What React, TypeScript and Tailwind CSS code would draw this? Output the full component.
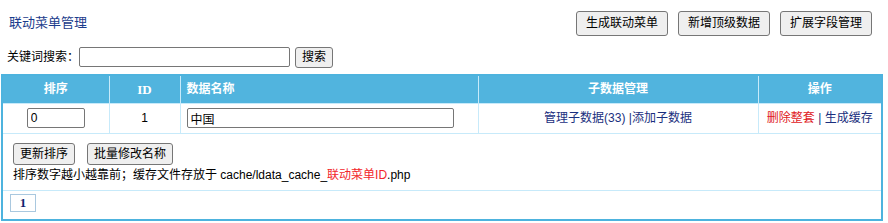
import React from "react";

const btn =
  "h-[25px] px-[9px] bg-[#efefef] border border-[#767676] rounded-[3px] text-[12px] text-black leading-none";

export default function App() {
  const font = { fontFamily: '"Liberation Sans", "Noto Sans CJK SC", sans-serif' };
  return (
    <div className="w-[888px] h-[223px] bg-white text-[12px] text-black" style={font}>
      {/* Top bar */}
      <div className="flex items-center justify-between h-[45px] pl-[9px] pr-[16px] pt-[1px]">
        <h1 className="text-[13px] text-[#1b3c8c] font-normal">联动菜单管理</h1>
        <div className="flex gap-[10px]">
          <button className={btn}>生成联动菜单</button>
          <button className={btn}>新增顶级数据</button>
          <button className={btn}>扩展字段管理</button>
        </div>
      </div>

      {/* Search */}
      <div className="flex items-center h-[29px] pl-[7px] pb-[5px]">
        <span>关键词搜索：</span>
        <input className="w-[211px] h-[20px] border border-[#767676] rounded-[2px] outline-none" />
        <button className="ml-[5px] h-[21px] px-[6px] bg-[#efefef] border border-[#767676] rounded-[3px] leading-none">
          搜索
        </button>
      </div>

      {/* Table box */}
      <div className="ml-[1px] w-[882px] border-2 border-[#4db3de]">
        <table className="w-full table-fixed border-collapse">
          <colgroup>
            <col className="w-[106px]" />
            <col className="w-[71px]" />
            <col className="w-[298px]" />
            <col className="w-[280px]" />
            <col />
          </colgroup>
          <thead>
            <tr className="h-[27px] bg-[#51b4de] text-white font-bold text-[12px]">
              <th className="border-r border-b border-[#c7eafa]">排序</th>
              <th className="border-r border-b border-[#c7eafa]" style={{ fontFamily: '"Liberation Serif", serif', fontSize: 13 }}>ID</th>
              <th className="border-r border-b border-[#c7eafa] text-left pl-[6px]">数据名称</th>
              <th className="border-r border-b border-[#c7eafa]">子数据管理</th>
              <th className="border-b border-[#c7eafa]">操作</th>
            </tr>
          </thead>
          <tbody>
            <tr className="h-[30px]">
              <td className="border-r border-b border-[#c7eafa] text-center">
                <input
                  defaultValue="0"
                  className="w-[58px] h-[20px] px-[3px] border border-[#767676] rounded-[2px] outline-none align-middle"
                />
              </td>
              <td className="border-r border-b border-[#c7eafa] text-center">1</td>
              <td className="border-r border-b border-[#c7eafa] pl-[6px]">
                <input
                  defaultValue="中国"
                  className="w-[267px] h-[20px] px-[3px] border border-[#767676] rounded-[2px] outline-none align-middle"
                />
              </td>
              <td className="border-r border-b border-[#c7eafa] text-center text-[#1a2f7e]">
                管理子数据(33) |添加子数据
              </td>
              <td className="border-b border-[#c7eafa] text-center">
                <span className="text-[#e0201c]">删除整套</span>
                <span className="text-[#1a2f7e]"> | 生成缓存</span>
              </td>
            </tr>
          </tbody>
        </table>

        <div className="pl-[10px] pt-[9px] pb-[6px] border-b border-[#c7eafa]">
          <div className="flex gap-[12px]">
            <button className="h-[22px] px-[6px] bg-[#efefef] border border-[#767676] rounded-[3px] leading-none">
              更新排序
            </button>
            <button className="h-[22px] px-[6px] bg-[#efefef] border border-[#767676] rounded-[3px] leading-none">
              批量修改名称
            </button>
          </div>
          <p className="mt-[1px] leading-[18px]">
            排序数字越小越靠前；缓存文件存放于 cache/ldata_cache_
            <span className="text-[#f2262b]">联动菜单ID</span>.php
          </p>
        </div>

        <div className="h-[28px] pl-[7px] pt-[3px]">
          <span
            className="inline-flex items-center justify-center w-[26px] h-[18px] border border-[#a9c8df] text-[#101f6e] font-bold text-[13px]"
            style={{ fontFamily: '"Liberation Serif", serif' }}
          >
            1
          </span>
        </div>
      </div>
    </div>
  );
}
